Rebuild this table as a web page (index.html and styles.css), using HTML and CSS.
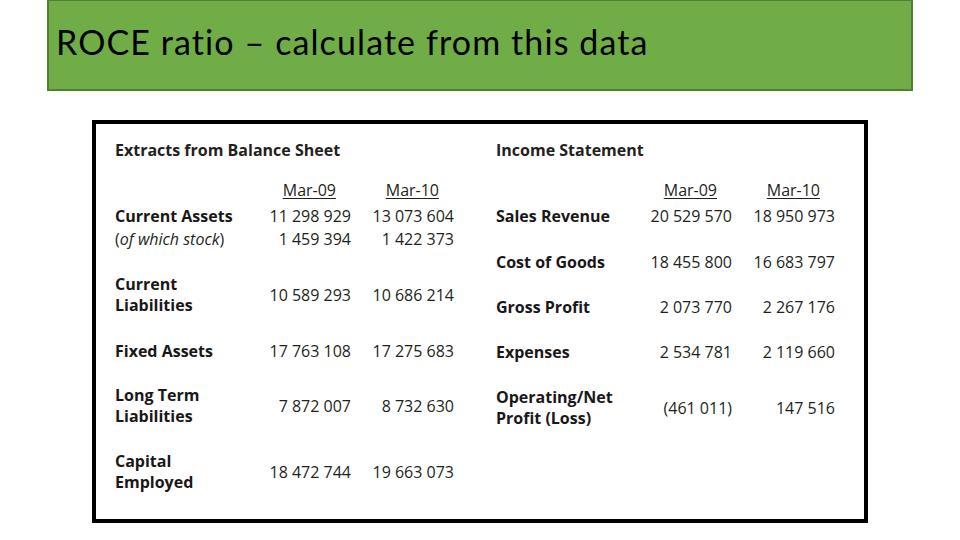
FILE: index.html
```html
<!DOCTYPE html>
<html>
<head>
<meta charset="utf-8">
<link rel="stylesheet" href="styles.css">
</head>
<body>
<div class="slide">
  <header class="banner">
    <h1 class="title">ROCE ratio – calculate from this data</h1>
  </header>
  <section class="sheet">
    <div class="table table-left">
      <div class="row title-row"><span class="heading">Extracts from Balance Sheet</span></div>
      <div class="row head-row gap-head"><span></span><span class="col-h">Mar-09</span><span class="col-h">Mar-10</span></div>
      <div class="row gap-s"><span class="lab">Current Assets</span><span class="num">11 298 929</span><span class="num">13 073 604</span></div>
      <div class="row gap-xs"><span class="lab-it">(<i>of which stock</i>)</span><span class="num">1 459 394</span><span class="num">1 422 373</span></div>
      <div class="row tall gap-l"><span class="lab">Current<br>Liabilities</span><span class="num">10 589 293</span><span class="num">10 686 214</span></div>
      <div class="row gap-l"><span class="lab">Fixed Assets</span><span class="num">17 763 108</span><span class="num">17 275 683</span></div>
      <div class="row tall gap-m"><span class="lab">Long Term<br>Liabilities</span><span class="num">7 872 007</span><span class="num">8 732 630</span></div>
      <div class="row tall gap-l"><span class="lab">Capital<br>Employed</span><span class="num">18 472 744</span><span class="num">19 663 073</span></div>
    </div>
    <div class="table table-right">
      <div class="row title-row"><span class="heading">Income Statement</span></div>
      <div class="row head-row gap-head"><span></span><span class="col-h">Mar-09</span><span class="col-h">Mar-10</span></div>
      <div class="row gap-s"><span class="lab">Sales Revenue</span><span class="num">20 529 570</span><span class="num">18 950 973</span></div>
      <div class="row gap-l"><span class="lab">Cost of Goods</span><span class="num">18 455 800</span><span class="num">16 683 797</span></div>
      <div class="row gap-m"><span class="lab">Gross Profit</span><span class="num">2 073 770</span><span class="num">2 267 176</span></div>
      <div class="row gap-m"><span class="lab">Expenses</span><span class="num">2 534 781</span><span class="num">2 119 660</span></div>
      <div class="row tall gap-l"><span class="lab">Operating/Net<br>Profit (Loss)</span><span class="num">(461 011)</span><span class="num">147 516</span></div>
    </div>
  </section>
</div>
</body>
</html>
```
FILE: styles.css
```css
* { box-sizing: border-box; }
html, body { margin: 0; padding: 0; background: #ffffff; }
body { width: 960px; height: 540px; overflow: hidden; }

.slide { padding-left: 47px; }

.banner {
  width: 866px;
  height: 91px;
  background: #70ad47;
  border: 2px solid #507e32;
  border-top-width: 1px;
  padding: 22px 0 0 7px;
}
.title {
  margin: 0;
  font-family: Lato, "Open Sans", sans-serif;
  font-weight: 400;
  font-size: 34px;
  line-height: 38px;
  letter-spacing: 1.1px;
  color: #000;
}

.sheet {
  margin: 29px 0 0 45px;
  width: 776px;
  height: 403px;
  border: 4px solid #000;
  background: #fff;
  padding: 16px 0 0 19px;
  display: flex;
  font-family: "Open Sans", "Noto Sans", sans-serif;
  color: #231f20;
}

.table { display: flex; flex-direction: column; }
.table-left { width: 381px; }
.table-left .row { grid-template-columns: 154px 82px 103px; }
.table-right .row { grid-template-columns: 144px 92px 103px; }

.row {
  display: grid;
  height: 22px;
  align-items: center;
  font-size: 16px;
  line-height: 21px;
}
.row.tall { height: 42px; }
.title-row { display: block; }

.gap-head { margin-top: 17px; }
.gap-s { margin-top: 4px; }
.gap-xs { margin-top: 1px; }
.gap-m { margin-top: 23px; }
.gap-l { margin-top: 24px; }

.heading { font-weight: 700; font-size: 16px; }
.lab { font-weight: 700; color: #1a1718; }
.lab-it { font-weight: 400; }
.num { text-align: right; white-space: nowrap; }
.col-h { text-align: right; padding-right: 15px; text-decoration: underline; text-underline-offset: 2px; }
```
